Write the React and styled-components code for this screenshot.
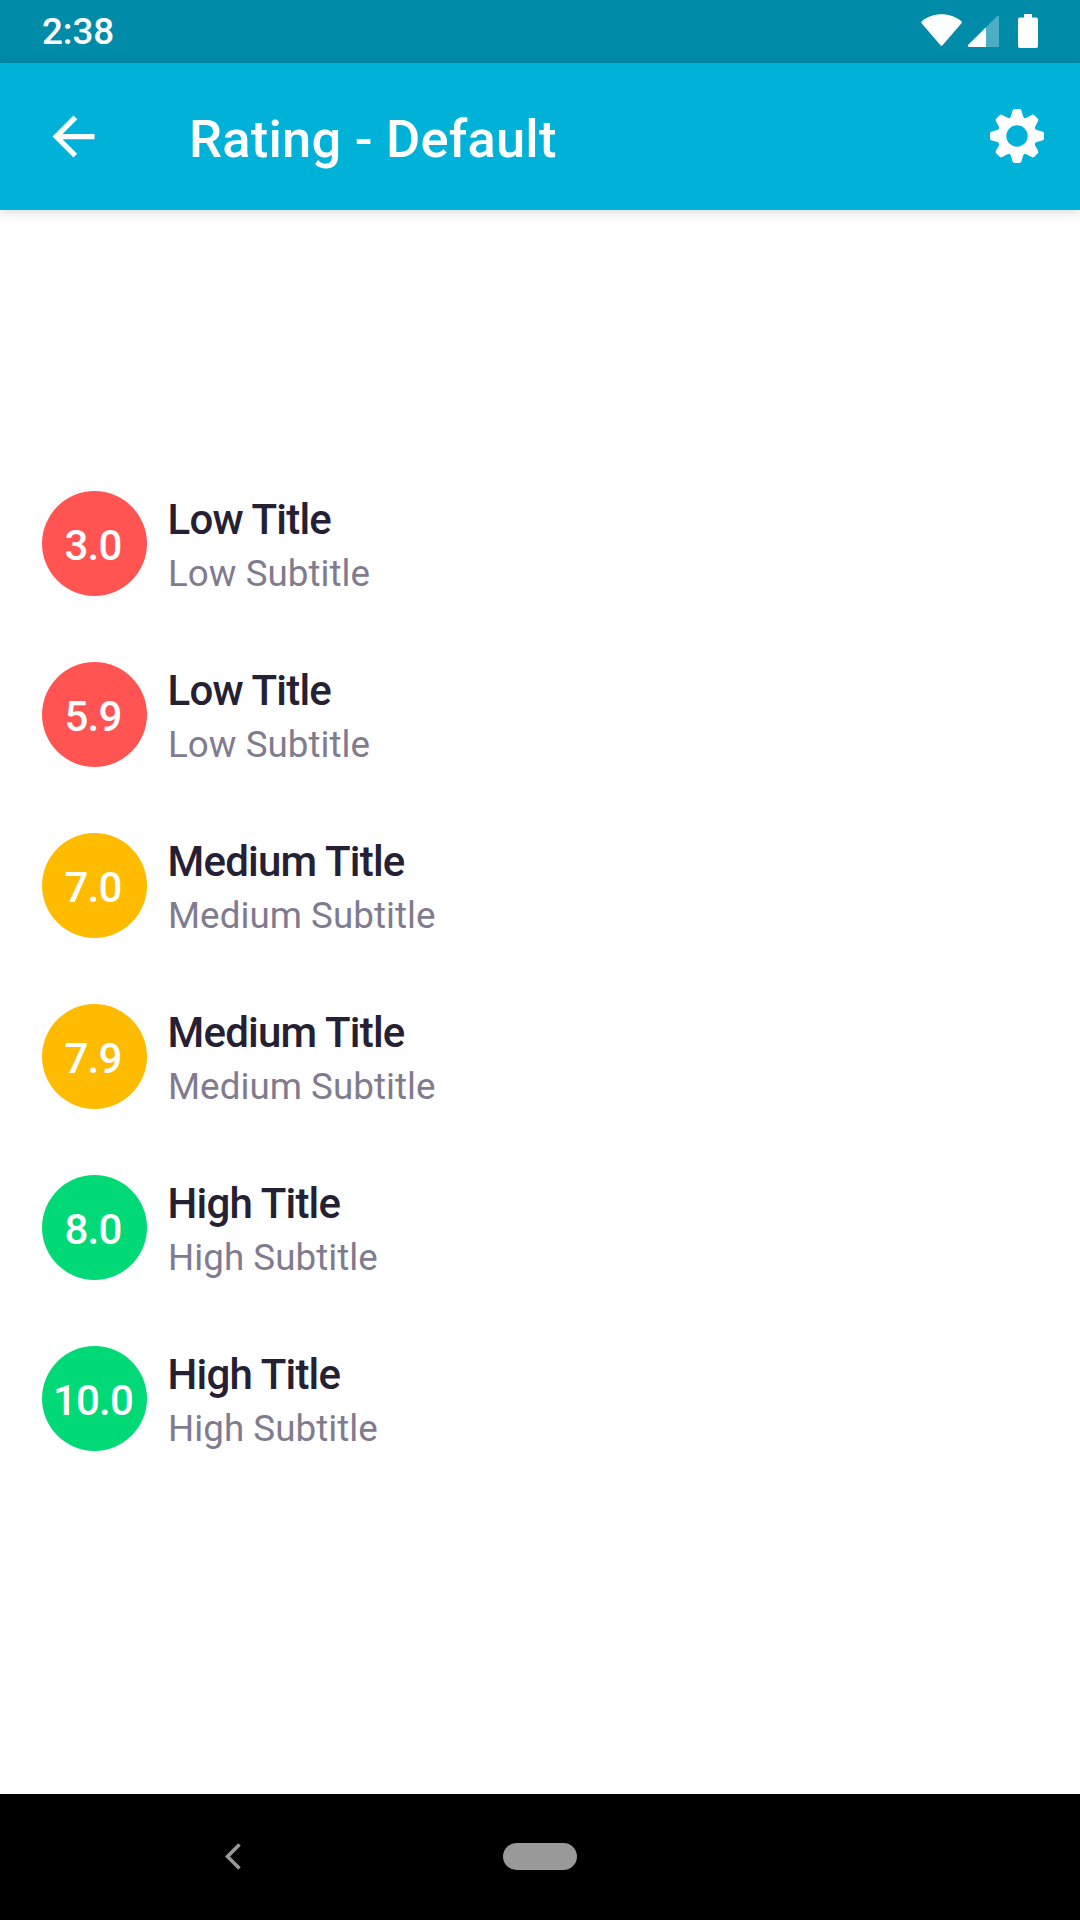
import React from "react";
import styled, { createGlobalStyle } from "styled-components";

const GlobalStyle = createGlobalStyle`
  * { box-sizing: border-box; }
  body { margin: 0; background: #fff; font-family: Roboto, sans-serif; }
`;

const Screen = styled.div`
  display: flex;
  flex-direction: column;
  width: 1080px;
  height: 1920px;
  background: #fff;
  overflow: hidden;
`;

const StatusBar = styled.div`
  flex: none;
  display: flex;
  align-items: center;
  justify-content: space-between;
  height: 63px;
  padding: 0 42px;
  background: #008ba9;
  color: #fff;
`;

const Clock = styled.span`
  font-size: 36.75px;
  line-height: 64px;
  font-weight: 500;
  letter-spacing: -0.1px;
`;

const StatusIcons = styled.svg`
  display: block;
  width: 120px;
  height: 63px;
  margin-right: -2px;
`;

const Toolbar = styled.header`
  flex: none;
  display: flex;
  align-items: center;
  height: 147px;
  padding: 0 36px 0 42px;
  background: #00b2d8;
  color: #fff;
  box-shadow: 0 2px 11px rgba(0, 0, 0, 0.16);
`;

const IconButton = styled.button`
  display: flex;
  padding: 0 0 1px;
  border: 0;
  background: none;
  color: inherit;
`;

const Heading = styled.h1`
  flex: 1;
  margin: 0;
  padding: 4px 0 0 84px;
  font-size: 52.5px;
  line-height: 62px;
  font-weight: 500;
  letter-spacing: 0.2px;
`;

const List = styled.main`
  flex: 1;
  display: flex;
  flex-direction: column;
  gap: 66px;
  padding: 281px 42px 0;
`;

const Row = styled.div`
  display: flex;
  gap: 21px;
  height: 105px;
`;

const Badge = styled.div`
  flex: none;
  width: 105px;
  height: 105px;
  padding-right: 3px;
  border-radius: 50%;
  background: ${(p) => p.$color};
  color: #fff;
  font-size: 42px;
  font-weight: 500;
  line-height: 110px;
  letter-spacing: -0.84px;
  text-align: center;
`;

const Labels = styled.div`
  display: flex;
  flex-direction: column;
  padding-top: 3px;
`;

const Title = styled.div`
  margin-left: -0.5px;
  font-size: 42px;
  line-height: 52px;
  font-weight: 500;
  letter-spacing: -0.79px;
  color: #252033;
`;

const Subtitle = styled.div`
  font-size: 36.75px;
  line-height: 56px;
  letter-spacing: 0.04px;
  color: #817b8f;
`;

const NavBar = styled.nav`
  flex: none;
  display: grid;
  grid-template-columns: 466px 148px 466px;
  align-items: center;
  justify-items: center;
  height: 126px;
  padding-bottom: 1px;
  background: #000;
  color: #999;
`;

const HomePill = styled.div`
  width: 74px;
  height: 27px;
  border-radius: 14px;
  background: #999;
`;

const ratings = [
  ["3.0", "Low", "#ff5452"],
  ["5.9", "Low", "#ff5452"],
  ["7.0", "Medium", "#ffbb00"],
  ["7.9", "Medium", "#ffbb00"],
  ["8.0", "High", "#00d976"],
  ["10.0", "High", "#00d976"],
];

const BackIcon = () => (
  <svg width="63" height="63" viewBox="0 0 24 24" fill="currentColor">
    <path d="M20 11H7.83l5.59-5.59L12 4l-8 8 8 8 1.41-1.41L7.83 13H20v-2z" />
  </svg>
);

const Tooth = ({ angle }) => (
  <path
    d="M-8 -17.3Q-6.3 -18.6 -5.8 -20.6L-4.5 -25.3Q-4 -27 -2.5 -27H2.5Q4 -27 4.5 -25.3L5.8 -20.6Q6.3 -18.6 8 -17.3Z"
    transform={`rotate(${angle})`}
  />
);

const GearIcon = () => (
  <svg width="54" height="54" viewBox="-27 -27 54 54" fill="currentColor">
    <circle r="14.9" fill="none" stroke="currentColor" strokeWidth="8.4" />
    {[0, 45, 90, 135, 180, 225, 270, 315].map((angle) => (
      <Tooth key={angle} angle={angle} />
    ))}
  </svg>
);

export default function App() {
  return (
    <>
      <GlobalStyle />
      <Screen>
        <StatusBar>
          <Clock>2:38</Clock>
          <StatusIcons viewBox="920 0 120 63" fill="#fff">
            <path d="M921.8 21.2C933 12 950 12 961.3 21.2Q962.2 22.2 961.3 23.4L942.5 45.2Q941.5 46.2 940.5 45.2L921.8 23.4Q921 22.2 921.8 21.2Z" />
            <path d="M986 27.3V47H969Q967 46.5 968 45Z" />
            <path d="M986 27.3L996.5 16.7Q998.6 15 999 17V47H986Z" opacity="0.3" />
            <path d="M1024 14H1032V17.5H1036Q1038 17.5 1038 19.5V46Q1038 48 1036 48H1020Q1018 48 1018 46V19.5Q1018 17.5 1020 17.5H1024Z" />
          </StatusIcons>
        </StatusBar>
        <Toolbar>
          <IconButton aria-label="Back"><BackIcon /></IconButton>
          <Heading>Rating - Default</Heading>
          <IconButton aria-label="Settings"><GearIcon /></IconButton>
        </Toolbar>
        <List>
          {ratings.map(([score, level, color]) => (
            <Row key={score}>
              <Badge $color={color}>{score}</Badge>
              <Labels>
                <Title>{level} Title</Title>
                <Subtitle>{level} Subtitle</Subtitle>
              </Labels>
            </Row>
          ))}
        </List>
        <NavBar>
          <svg width="16" height="27" viewBox="0 0 16 27" fill="none" stroke="currentColor" strokeWidth="3.6">
            <path d="M14.5 1.5L2.5 13.5L14.5 25.5" />
          </svg>
          <HomePill />
        </NavBar>
      </Screen>
    </>
  );
}
